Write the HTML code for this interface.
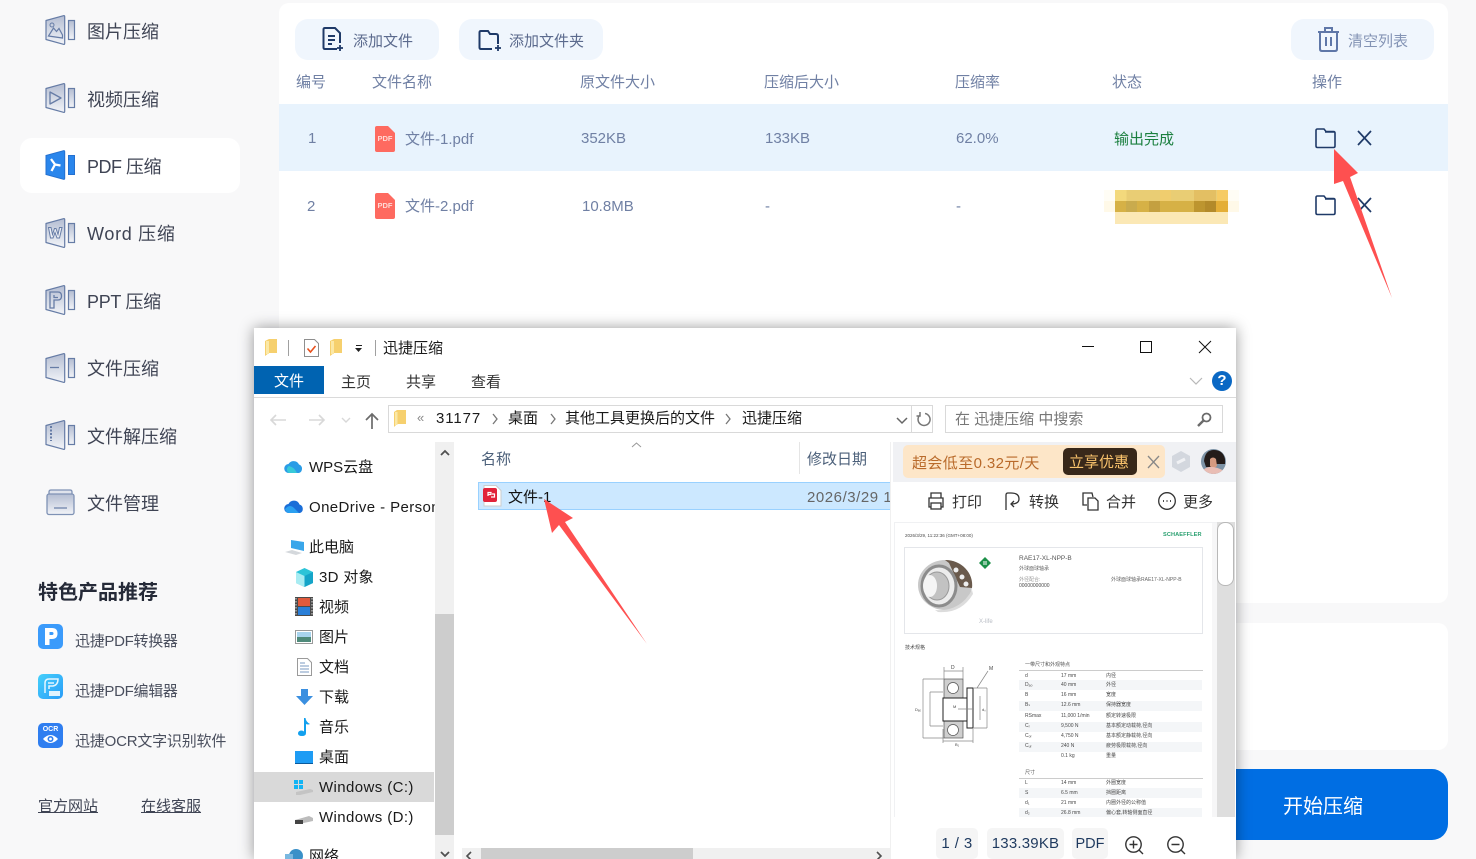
<!DOCTYPE html>
<html lang="zh"><head><meta charset="utf-8"><title>迅捷压缩</title>
<style>
*{box-sizing:border-box}
html,body{margin:0;padding:0;width:1476px;height:859px;overflow:hidden;background:#f8f8f9;font-family:"Liberation Sans","Noto Sans CJK SC",sans-serif}
#w{position:relative;width:1476px;height:859px;overflow:hidden}
.a{position:absolute}
.t{position:absolute;white-space:nowrap;line-height:20px;height:20px;margin-top:1px}
.s{font-size:18px;color:#3f4454}
.p{font-size:15px;color:#4a4f5e;letter-spacing:-.3px}
.h{font-size:15px;color:#7080a4}
.r{font-size:15px;color:#7080a4}
.btn{position:absolute;top:19px;height:41px;background:#f0f6fd;border-radius:13px}
.n{font-size:15px;color:#1a1a1a}
.x{font-size:5px;color:#4a4a4a;line-height:6px;height:6px;margin-top:0}
svg{position:absolute;overflow:visible}
</style></head><body><div id="w">
<svg width="0" height="0" style="position:absolute"><defs>
<linearGradient id="g" x1="0" y1="0" x2="0" y2="1"><stop offset="0" stop-color="#b4bdd2"/><stop offset="1" stop-color="#f2f4f8"/></linearGradient>
<symbol id="pn" viewBox="0 0 30 30" overflow="visible"><path d="M1 5.500 18.500.7Q19.700.4 19.700 1.600V28.400Q19.700 29.600 18.500 29.300L1 24.500Z" fill="url(#g)" stroke="#667ca6" stroke-width="1.200" stroke-linejoin="round"/><rect x="23.500" y="5.500" width="6" height="19" fill="url(#g)" stroke="#667ca6" stroke-width="1.200"/></symbol>
<clipPath id="av"><circle cx="12.500" cy="12.500" r="12.500"/></clipPath>
</defs></svg>

<!-- sidebar -->
<div class="a" style="left:20px;top:138px;width:220px;height:55px;background:#fff;border-radius:12px"></div>

<svg style="left:45px;top:15px" width="30" height="30"><use href="#pn"/><path d="M3.500 21 8.500 13l3 3.500 2.500-3 3.500 6.500V23z" fill="none" stroke="#667ca6" stroke-width="1.200"/><circle cx="7" cy="10" r="2" fill="none" stroke="#667ca6"/></svg>
<div class="t s" style="left:87px;top:21px">图片压缩</div>
<svg style="left:45px;top:83px" width="30" height="30"><use href="#pn"/><path d="M5 9v12l11-6z" fill="none" stroke="#667ca6" stroke-width="1.300" stroke-linejoin="round"/></svg>
<div class="t s" style="left:87px;top:89px">视频压缩</div>
<svg style="left:45px;top:150px" width="30" height="30"><path d="M1 5.500 18.500.7Q19.700.4 19.700 1.600V28.400Q19.700 29.600 18.500 29.300L1 24.500Z" fill="#2a86ec" stroke="#2470d0"/><rect x="23.500" y="5.500" width="6" height="19" fill="#2a86ec" stroke="#2470d0"/><path d="M6 9 10 14.500 6.500 21M10 14.500 15.500 15.500" fill="none" stroke="#fff" stroke-width="2.300"/></svg>
<div class="t s" style="left:87px;top:156px;letter-spacing:-.5px">PDF 压缩</div>
<svg style="left:45px;top:218px" width="30" height="30"><use href="#pn"/><path d="M3.500 9.500h2.500l1.500 7 2-6h1.500l2 6 1.500-7h2.500L14.500 20h-2.500l-2-5.500-2 5.500H5.500z" fill="#eef0f5" stroke="#667ca6"/></svg>
<div class="t s" style="left:87px;top:223px;letter-spacing:.7px">Word 压缩</div>
<svg style="left:45px;top:285px" width="30" height="30"><use href="#pn"/><path d="M5 7h8q3.500 0 3.500 4t-3.500 4H9v8H5zM9 10v2.500h4" fill="none" stroke="#667ca6" stroke-width="1.300"/></svg>
<div class="t s" style="left:87px;top:291px;letter-spacing:-.3px">PPT 压缩</div>
<svg style="left:45px;top:353px" width="30" height="30"><use href="#pn"/><path d="M5 14.500h9" stroke="#667ca6" stroke-width="1.300"/></svg>
<div class="t s" style="left:87px;top:358px">文件压缩</div>
<svg style="left:45px;top:420px" width="30" height="30"><use href="#pn"/><path d="M6 6v15" stroke="#667ca6" stroke-width="2" stroke-dasharray="2 1.500"/></svg>
<div class="t s" style="left:87px;top:426px">文件解压缩</div>
<svg style="left:46px;top:488px" width="29" height="28"><path d="M3 4q0-2 2-2h19q2 0 2 2v3H3z" fill="#dfe3ec" stroke="#7f92b5" stroke-width="1.300"/><rect x="1" y="6" width="27" height="20.500" rx="2" fill="url(#g)" stroke="#7f92b5" stroke-width="1.300"/><path d="M8 20h13" stroke="#667ca6" stroke-width="1.200"/></svg>
<div class="t s" style="left:87px;top:493px">文件管理</div>

<div class="t" style="left:38px;top:582px;font-size:20px;font-weight:700;color:#252a38">特色产品推荐</div>
<div class="a" style="left:38px;top:624px;width:25px;height:25px;border-radius:5px;background:#3b9bfb"></div>
<svg style="left:38px;top:624px" width="25" height="25"><path d="M7 21V4h7q5.500 0 5.500 5.500T14 15h-2.500v6z" fill="#fff"/><path d="M11.500 8v3H14q1.500 0 1.500-1.500T14 8z" fill="#3b9bfb"/></svg>
<div class="t p" style="left:75px;top:631px">迅捷PDF转换器</div>
<div class="a" style="left:38px;top:674px;width:25px;height:25px;border-radius:5px;background:linear-gradient(135deg,#45d0fb,#2a9cf8)"></div>
<svg style="left:38px;top:674px" width="25" height="25"><path d="M7 19V9q0-4 4-4h9q0 6-5 7h-4v3M10 9h6" fill="none" stroke="#e4f6ff" stroke-width="1.500"/><rect x="11" y="17" width="11" height="5" fill="#fff" opacity=".85"/></svg>
<div class="t p" style="left:75px;top:681px">迅捷PDF编辑器</div>
<div class="a" style="left:38px;top:723px;width:25px;height:25px;border-radius:5px;background:#2f7ef0"></div>
<div class="t" style="left:38px;top:725px;width:25px;text-align:center;font-size:7px;line-height:8px;height:8px;font-weight:700;color:#fff">OCR</div>
<svg style="left:38px;top:723px" width="25" height="25"><path d="M5 16q7.500-8 15 0-7.500 8-15 0z" fill="#fff"/><circle cx="12.500" cy="16" r="3" fill="#2f7ef0"/><circle cx="12.500" cy="16" r="1.400" fill="#fff"/></svg>
<div class="t p" style="left:75px;top:731px;letter-spacing:-.2px">迅捷OCR文字识别软件</div>
<div class="t" style="left:38px;top:796px;font-size:15px;color:#3f4454;text-decoration:underline">官方网站</div>
<div class="t" style="left:141px;top:796px;font-size:15px;color:#3f4454;text-decoration:underline">在线客服</div>

<!-- main card -->
<div class="a" style="left:279px;top:3px;width:1169px;height:600px;background:#fff;border-radius:10px"></div>
<div class="a" style="left:1100px;top:623px;width:348px;height:127px;background:#fff;border-radius:10px"></div>
<div class="a" style="left:1100px;top:769px;width:348px;height:71px;background:#006ee3;border-radius:16px"></div>
<div class="t" style="left:1283px;top:796px;font-size:20px;color:#fff">开始压缩</div>

<div class="btn" style="left:295px;width:144px"></div>
<svg style="left:322px;top:27px" width="24" height="26" fill="none" stroke="#1f3a68" stroke-width="2"><path d="M15 22H3q-1.500 0-1.500-1.500v-18Q1.500 1 3 1h10l5 5v10"/><path d="M6 9h7M6 13h7M6 17h4"/><path d="M18 18v6M15 21h6" stroke-width="1.800"/></svg>
<div class="t r" style="left:353px;top:31px;color:#5b6a8d">添加文件</div>
<div class="btn" style="left:459px;width:144px"></div>
<svg style="left:478px;top:30px" width="25" height="26" fill="none" stroke="#1f3a68" stroke-width="2"><path d="M14 19H3q-1.500 0-1.500-1.500v-15Q1.500 1 3 1h7l2 3h6q2 0 2 2v8"/><path d="M20 15v6M17 18h6" stroke-width="1.800"/></svg>
<div class="t r" style="left:509px;top:31px;color:#5b6a8d">添加文件夹</div>
<div class="btn" style="left:1291px;width:143px"></div>
<svg style="left:1317px;top:27px" width="24" height="25" fill="none" stroke="#5f77a8" stroke-width="2"><path d="M1 5h21M8 4V1h7v3M3 5v17q0 2 2 2h13q2 0 2-2V5M9 10v9M14 10v9"/></svg>
<div class="t r" style="left:1348px;top:31px;color:#8494b5">清空列表</div>

<div class="t h" style="left:296px;top:72px">编号</div>
<div class="t h" style="left:372px;top:72px">文件名称</div>
<div class="t h" style="left:580px;top:72px">原文件大小</div>
<div class="t h" style="left:764px;top:72px">压缩后大小</div>
<div class="t h" style="left:955px;top:72px">压缩率</div>
<div class="t h" style="left:1112px;top:72px">状态</div>
<div class="t h" style="left:1312px;top:72px">操作</div>

<div class="a" style="left:279px;top:104px;width:1169px;height:67px;background:#e8f3fd"></div>
<div class="t r" style="left:308px;top:128px">1</div>
<svg style="left:375px;top:126px" width="20" height="26"><path d="M2 0h11l7 7v17q0 2-2 2H2q-2 0-2-2V2q0-2 2-2z" fill="#fe6a60"/></svg>
<div class="t" style="left:375px;top:128px;width:20px;text-align:center;font-size:7.500px;font-weight:700;color:#ffd8d4">PDF</div>
<div class="t" style="left:405px;top:129px;font-size:15px;color:#7080a4">文件-1.pdf</div>
<div class="t r" style="left:581px;top:128px">352KB</div>
<div class="t r" style="left:765px;top:128px">133KB</div>
<div class="t r" style="left:956px;top:128px">62.0%</div>
<div class="t" style="left:1114px;top:129px;font-size:15px;color:#1c8040">输出完成</div>
<svg style="left:1315px;top:128px" width="22" height="21" fill="none" stroke="#1f3a68" stroke-width="1.600"><path d="M2.500 19.500H18.500q1.500 0 1.500-1.500V5q0-1.500-1.500-1.500H11L9 1H2.500Q1 1 1 2.500V18q0 1.500 1.500 1.500zM10 4h10"/></svg>
<svg style="left:1357px;top:130px" width="15" height="16" stroke="#1f3a68" stroke-width="1.700"><path d="M1 1 14 15M14 1 1 15"/></svg>

<div class="t r" style="left:307px;top:196px">2</div>
<svg style="left:375px;top:193px" width="20" height="26"><path d="M2 0h11l7 7v17q0 2-2 2H2q-2 0-2-2V2q0-2 2-2z" fill="#fe6a60"/></svg>
<div class="t" style="left:375px;top:195px;width:20px;text-align:center;font-size:7.500px;font-weight:700;color:#ffd8d4">PDF</div>
<div class="t" style="left:405px;top:196px;font-size:15px;color:#7080a4">文件-2.pdf</div>
<div class="t r" style="left:582px;top:196px">10.8MB</div>
<div class="t r" style="left:765px;top:196px">-</div>
<div class="t r" style="left:956px;top:196px">-</div>

<svg style="left:1104px;top:190px" width="135" height="34" shape-rendering="crispEdges">
<rect width="135" height="11" fill="#fffdf5"/><rect y="11" width="135" height="11" fill="#fff9e8"/>
<g transform="translate(11,0)">
<rect width="113" height="11" fill="#e9cd74"/><rect width="11.300" height="11" fill="#f3d97c"/><rect x="79" width="22" height="11" fill="#e3bf63"/><rect x="102" width="11" height="11" fill="#f6cb64"/><rect x="45" width="11" height="11" fill="#f0cd6e"/>
<rect y="11" width="113" height="11" fill="#d6b146"/><rect x="11" y="11" width="11" height="11" fill="#c9ab4d"/><rect x="34" y="11" width="11" height="11" fill="#c4a040"/><rect x="79" y="11" width="11" height="11" fill="#bd952f"/><rect x="90" y="11" width="11" height="11" fill="#b38a2a"/><rect x="101" y="11" width="12" height="11" fill="#e4ae36"/>
<rect y="22" width="113" height="12" fill="#fbe8b5"/></g></svg>
<svg style="left:1315px;top:195px" width="22" height="21" fill="none" stroke="#1f3a68" stroke-width="1.600"><path d="M2.500 19.500H18.500q1.500 0 1.500-1.500V5q0-1.500-1.500-1.500H11L9 1H2.500Q1 1 1 2.500V18q0 1.500 1.500 1.500zM10 4h10"/></svg>
<svg style="left:1357px;top:197px" width="15" height="16" stroke="#1f3a68" stroke-width="1.700"><path d="M1 1 14 15M14 1 1 15"/></svg>
<svg style="left:0;top:0" width="1476" height="859"><path d="M1334 149 1358 173 1350 177 1392 298 1343 181 1334 184Z" fill="#fe5050"/></svg>

<!-- explorer dialog -->
<div class="a" style="left:254px;top:328px;width:982px;height:531px;background:#fff;box-shadow:0 0 14px rgba(0,0,0,.4)"></div>

<svg style="left:265px;top:339px" width="14" height="18"><path d="M0 2 4 0h8v14H4l-4 3z" fill="#f6d06e"/><rect x="1" y="2" width="3" height="13" fill="#fbe8a6"/></svg>
<div class="a" style="left:288px;top:340px;width:1px;height:16px;background:#a0a0a0"></div>
<svg style="left:304px;top:339px" width="15" height="18"><path d="M.5.500h10l4 4v13H.500z" fill="#fff" stroke="#8e8e8e"/><path d="M3.500 9.500l3 3.500 5-6" fill="none" stroke="#e8501c" stroke-width="1.600"/></svg>
<svg style="left:330px;top:339px" width="14" height="18"><path d="M0 2 4 0h8v14H4l-4 3z" fill="#f6d06e"/><rect x="1" y="2" width="3" height="13" fill="#fbe8a6"/></svg>
<svg style="left:355px;top:345px" width="8" height="8"><path d="M1 .500h6" stroke="#222"/><path d="M0 3h7L3.500 7z" fill="#222"/></svg>
<div class="a" style="left:375px;top:340px;width:1px;height:16px;background:#a0a0a0"></div>
<div class="t" style="left:383px;top:338px;font-size:15px;color:#1a1a1a">迅捷压缩</div>
<div class="a" style="left:1082px;top:346px;width:12px;height:1px;background:#111"></div>
<div class="a" style="left:1140px;top:341px;width:12px;height:12px;border:1px solid #111"></div>
<svg style="left:1199px;top:341px" width="12" height="12" stroke="#111"><path d="M0 0 12 12M12 0 0 12"/></svg>

<div class="a" style="left:254px;top:366px;width:70px;height:28px;background:#0063b1"></div>
<div class="t" style="left:274px;top:371px;font-size:15px;color:#fff">文件</div>
<div class="t n" style="left:341px;top:372px;color:#333">主页</div>
<div class="t n" style="left:406px;top:372px;color:#333">共享</div>
<div class="t n" style="left:471px;top:372px;color:#333">查看</div>
<svg style="left:1189px;top:377px" width="14" height="8" fill="none" stroke="#b8b8b8" stroke-width="1.200"><path d="M1 1 7 7 13 1"/></svg>
<div class="a" style="left:1212px;top:371px;width:20px;height:20px;border-radius:50%;background:#0a68c4;color:#fff;font-size:15px;font-weight:700;line-height:20px;text-align:center">?</div>
<div class="a" style="left:254px;top:397px;width:982px;height:1px;background:#dadada"></div>

<svg style="left:270px;top:412px" width="108" height="17" fill="none"><path d="M1 8h15M6 3 1 8l5 5" stroke="#d8d8d8" stroke-width="1.600"/><path d="M39 8h15M49 3l5 5-5 5" stroke="#d8d8d8" stroke-width="1.600"/><path d="M72 6l4 4 4-4" stroke="#d8d8d8" stroke-width="1.400"/><path d="M102 17V2M96 8l6-6 6 6" stroke="#6b6b6b" stroke-width="1.700"/></svg>
<div class="a" style="left:388px;top:405px;width:545px;height:28px;border:1px solid #d9d9d9"></div>
<div class="a" style="left:911px;top:405px;width:1px;height:28px;background:#d9d9d9"></div>
<svg style="left:394px;top:410px" width="13" height="17"><path d="M0 2 3 0h9v14H3l-3 3z" fill="#f6d06e"/><rect x="1" y="2" width="2.500" height="13" fill="#fbe8a6"/></svg>
<div class="t" style="left:417px;top:407px;font-size:13px;color:#888">«</div>
<div class="t n" style="left:436px;top:408px;letter-spacing:.9px">31177</div>
<svg style="left:491px;top:413px" width="240" height="12" fill="none" stroke="#777" stroke-width="1.300"><path d="M2 1l4 5-4 5M60 1l4 5-4 5M235 1l4 5-4 5"/></svg>
<div class="t n" style="left:508px;top:408px">桌面</div>
<div class="t n" style="left:565px;top:408px">其他工具更换后的文件</div>
<div class="t n" style="left:742px;top:408px">迅捷压缩</div>
<svg style="left:896px;top:417px" width="12" height="8" fill="none" stroke="#666" stroke-width="1.500"><path d="M1 1l5 5 5-5"/></svg>
<svg style="left:916px;top:412px" width="15" height="15" fill="none" stroke="#777" stroke-width="1.500"><path d="M9 1.500A6 6 0 1 1 4 3M4 0v4H.500"/></svg>
<div class="a" style="left:945px;top:405px;width:278px;height:28px;border:1px solid #d9d9d9"></div>
<div class="t" style="left:955px;top:409px;font-size:15px;color:#777">在 迅捷压缩 中搜索</div>
<svg style="left:1197px;top:412px" width="15" height="15" fill="none" stroke="#6b6b6b" stroke-width="1.800"><circle cx="9.500" cy="5.500" r="4"/><path d="M6.500 8.500 1 14" stroke-width="2.400"/></svg>

<!-- nav -->
<div class="a" style="left:435px;top:442px;width:19px;height:417px;background:#f0f0f0"></div>
<div class="a" style="left:435px;top:614px;width:19px;height:221px;background:#cdcdcd"></div>
<svg style="left:440px;top:449px" width="10" height="7" fill="none" stroke="#505050" stroke-width="1.800"><path d="M1 6l4-4 4 4"/></svg>
<svg style="left:440px;top:851px" width="10" height="7" fill="none" stroke="#505050" stroke-width="1.800"><path d="M1 1l4 4 4-4"/></svg>
<div class="a" style="left:254px;top:772px;width:180px;height:30px;background:#d9d9d9"></div>

<svg style="left:284px;top:459px" width="20" height="15"><path d="M5 14a4.500 4.500 0 0 1-.5-9A6 6 0 0 1 15 5.500 4.500 4.500 0 0 1 15 14z" fill="#2a9ce6"/><path d="M5 14a4 4 0 0 1 0-7q5 1 8 7z" fill="#38c9d8"/></svg>
<div class="t n" style="left:309px;top:457px">WPS云盘</div>
<svg style="left:284px;top:499px" width="21" height="15"><path d="M5 14a4.500 4.500 0 0 1-.5-9A6 6 0 0 1 15.500 5.500 4.500 4.500 0 0 1 16 14z" fill="#1a6ed8"/><path d="M1 10q5-6 10 0l4 4H5q-3 0-4-4z" fill="#2ba0f0"/></svg>
<div class="a" style="left:309px;top:497px;width:126px;height:22px;overflow:hidden"><div class="t n" style="left:0;top:0;letter-spacing:.4px">OneDrive - Personal</div></div>
<svg style="left:285px;top:539px" width="20" height="17"><path d="M6 1 19 3v9L6 9z" fill="#39a6ea"/><path d="M0 13l7-2 10 3-6 2z" fill="#d4d8dc"/></svg>
<div class="t n" style="left:309px;top:537px">此电脑</div>
<svg style="left:295px;top:568px" width="19" height="19"><path d="M9.500 0 18 4v11l-8.500 4L1 15V4z" fill="#2cc4d8"/><path d="M1 4l8.500 4v11L1 15z" fill="#a8ecf2"/><path d="M9.500 8 18 4v11l-8.500 4z" fill="#15a4c8"/></svg>
<div class="t n" style="left:319px;top:567px;letter-spacing:.3px">3D 对象</div>
<svg style="left:295px;top:597px" width="18" height="19"><rect width="18" height="19" fill="#4a4a4a"/><rect x="3" y="1" width="12" height="8" fill="#e05a3c"/><rect x="3" y="10" width="12" height="8" fill="#2a7fd8"/><path d="M1 1v17M17 1v17" stroke="#ddd" stroke-dasharray="1.500 1.500"/></svg>
<div class="t n" style="left:319px;top:597px">视频</div>
<svg style="left:295px;top:630px" width="18" height="14"><rect x=".5" y=".5" width="17" height="13" fill="#fff" stroke="#9a9a9a"/><rect x="2" y="2" width="14" height="5" fill="#a8d4ee"/><rect x="2" y="7" width="14" height="5" fill="#4f8a7a"/></svg>
<div class="t n" style="left:319px;top:627px">图片</div>
<svg style="left:297px;top:658px" width="15" height="18" fill="none"><path d="M.5.500h10l4 4v13H.500z" fill="#fff" stroke="#9a9a9a"/><path d="M3 5h5M3 8h9M3 11h9M3 14h9" stroke="#7a9ac0"/></svg>
<div class="t n" style="left:319px;top:657px">文档</div>
<svg style="left:296px;top:689px" width="17" height="16"><path d="M5 0h7v7h5l-8.500 9L0 7h5z" fill="#3a8fe0"/></svg>
<div class="t n" style="left:319px;top:687px">下载</div>
<svg style="left:298px;top:718px" width="13" height="18"><path d="M6 0h1.500q.5 4 4.500 6-2 1-4 0v9q0 3-4 3T0 15.500 3 12.500q2 0 3 1z" fill="#12a0ee"/></svg>
<div class="t n" style="left:319px;top:717px">音乐</div>
<div class="a" style="left:295px;top:751px;width:18px;height:13px;background:#1e9cf4;border-bottom:1px solid #0a5a9c"></div>
<div class="t n" style="left:319px;top:747px">桌面</div>
<svg style="left:294px;top:780px" width="20" height="16"><rect x="0" y="0" width="4" height="4" fill="#12b4f4"/><rect x="5" y="0" width="4" height="4" fill="#12b4f4"/><rect x="0" y="5" width="4" height="4" fill="#12b4f4"/><rect x="5" y="5" width="4" height="4" fill="#12b4f4"/><path d="M2 12l14-3 3 1v2L6 15H2z" fill="#c4c4c4"/></svg>
<div class="t n" style="left:319px;top:777px;letter-spacing:.4px">Windows (C:)</div>
<svg style="left:295px;top:816px" width="19" height="9"><path d="M0 4l14-4 4 2v3L4 8H0z" fill="#bcbcbc"/><path d="M0 4h8v4H0z" fill="#444"/></svg>
<div class="t n" style="left:319px;top:807px;letter-spacing:.4px">Windows (D:)</div>
<svg style="left:285px;top:848px" width="19" height="11"><circle cx="11" cy="8" r="7" fill="#3a90c8"/><rect x="0" y="6" width="8" height="6" fill="#7ab8e0"/></svg>
<div class="t n" style="left:309px;top:846px">网络</div>

<!-- list -->
<svg style="left:631px;top:442px" width="11" height="6" fill="none" stroke="#999"><path d="M1 5l4.500-4L10 5"/></svg>
<div class="t" style="left:481px;top:449px;font-size:15px;color:#4c607a">名称</div>
<div class="a" style="left:799px;top:442px;width:1px;height:32px;background:#e5e5e5"></div>
<div class="t" style="left:807px;top:449px;font-size:15px;color:#4c607a">修改日期</div>
<div class="a" style="left:478px;top:482px;width:412px;height:28px;background:#cce8ff;border:1px solid #99d1ff;border-right:0"></div>
<svg style="left:483px;top:485px" width="19" height="22"><path d="M1 .500h12l5 5v15.500H1z" fill="#fff" stroke="#ccc"/><rect x="0" y="3" width="14" height="14" rx="2" fill="#e1233a"/><path d="M5 11V7.500h3v2H5M9 9h2.500v3H8" fill="none" stroke="#fff" stroke-width="1.200"/></svg>
<div class="t n" style="left:508px;top:487px;color:#111">文件-1</div>
<div class="t" style="left:807px;top:487px;font-size:15px;color:#666;letter-spacing:.55px">2026/3/29 11:22</div>
<div class="a" style="left:462px;top:848px;width:428px;height:11px;background:#f0f0f0"></div>
<div class="a" style="left:481px;top:848px;width:212px;height:11px;background:#cdcdcd"></div>
<svg style="left:466px;top:852px" width="7" height="8" fill="none" stroke="#505050" stroke-width="1.600"><path d="M5 0 1 4l4 4"/></svg>
<svg style="left:876px;top:852px" width="7" height="8" fill="none" stroke="#505050" stroke-width="1.600"><path d="M1 0l4 4-4 4"/></svg>

<svg style="left:0;top:0" width="1476" height="859"><path d="M544 499 573 518 565 522 647 644 559 525 552 533Z" fill="#fe5050"/></svg>

<!-- preview pane -->
<div class="a" style="left:890px;top:442px;width:346px;height:417px;background:#fff;border-left:1px solid #f0f0f0"></div>
<div class="a" style="left:893px;top:442px;width:343px;height:40px;background:#f0f1f4"></div>
<div class="a" style="left:903px;top:445px;width:262px;height:33px;background:#fde6c8;border-radius:5px"></div>
<div class="t" style="left:912px;top:453px;font-size:15px;color:#b96a2a;letter-spacing:.4px">超会低至0.32元/天</div>
<div class="a" style="left:1063px;top:448px;width:74px;height:27px;background:#38281a;border-radius:5px"></div>
<div class="t" style="left:1069px;top:452px;font-size:15px;color:#f8c26c">立享优惠</div>
<svg style="left:1148px;top:456px" width="11" height="12" stroke="#888" stroke-width="1.300"><path d="M0 0 11 12M11 0 0 12"/></svg>
<svg style="left:1172px;top:451px" width="18" height="21"><path d="M9 0 18 5v11l-9 5-9-5V5z" fill="#d3d7de"/><path d="M5 12 13 8" stroke="#f0f1f4" stroke-width="3"/></svg>
<svg style="left:1201px;top:449px" width="25" height="25"><g clip-path="url(#av)"><rect width="25" height="25" fill="#7d93a6"/><path d="M3 12Q4 1 13 1t11 9v5H15l-4 3H5z" fill="#241c1a"/><path d="M9 10q3-3 6 0l1 7-4 3-3-3z" fill="#d59a80"/><path d="M0 25q3-8 12-7t13 7z" fill="#e9bdb4"/></g></svg>

<svg style="left:928px;top:492px" width="16" height="18" fill="none" stroke="#333" stroke-width="1.300"><path d="M3 6V1h10v5M3 15H1V6h14v9h-2"/><rect x="3" y="11" width="10" height="6"/></svg>
<div class="t n" style="left:952px;top:492px;color:#333">打印</div>
<svg style="left:1005px;top:492px" width="16" height="19" fill="none" stroke="#333" stroke-width="1.300"><path d="M1 18V3q0-2 2-2h3q8 0 8 6 0 5-8 5"/><path d="M9 9 6 12l3 3"/></svg>
<div class="t n" style="left:1029px;top:492px;color:#333">转换</div>
<svg style="left:1082px;top:492px" width="17" height="19" fill="none" stroke="#333" stroke-width="1.300"><path d="M5 13H1V1h9l1 4"/><path d="M6 6h7l3 3v9H6z"/></svg>
<div class="t n" style="left:1106px;top:492px;color:#333">合并</div>
<svg style="left:1158px;top:492px" width="18" height="18" fill="none" stroke="#333" stroke-width="1.300"><circle cx="9" cy="9" r="8.300"/><path d="M5 9h1M8.500 9h1M12 9h1" stroke-width="1.700"/></svg>
<div class="t n" style="left:1183px;top:492px;color:#333">更多</div>

<!-- document -->
<div class="a" style="left:894px;top:522px;width:323px;height:295px;background:#fff;border:1px solid #f0f1f3;border-bottom:0;border-right:0;overflow:hidden">
  <div class="a" style="left:317px;top:0;width:5px;height:295px;background:#f6f6f7"></div>
  <div class="t x" style="left:10px;top:10px;font-size:4.500px">2026/3/29, 11:22:36 (GMT+08:00)</div>
  <div class="t x" style="left:268px;top:9px;font-weight:700;color:#2aa070;font-size:5.600px;letter-spacing:.1px">SCHAEFFLER</div>
  <div class="a" style="left:9px;top:24px;width:299px;height:87px;border:1px solid #e4e6ea"></div>
  <svg style="left:20px;top:32px" width="60" height="60"><ellipse cx="30" cy="30" rx="27" ry="25" fill="#c8c8c8"/><path d="M30 5a27 25 0 0 1 27 28L45 32 34 8z" fill="#6a5a4c"/><circle cx="47" cy="22" r="2.500" fill="#eee"/><circle cx="51" cy="29" r="2.500" fill="#eee"/><circle cx="41" cy="15" r="2.500" fill="#eee"/><ellipse cx="24" cy="31" rx="17" ry="20" fill="#ececec" stroke="#8c8c8c" stroke-width="3"/><ellipse cx="22" cy="31" rx="12" ry="14" fill="#c2c2c2" stroke="#999"/><ellipse cx="15" cy="31" rx="7" ry="11" fill="#f5f5f5"/><path d="M20 55q25 2 37-20l1 4q-12 20-35 18z" fill="#dcdcdc"/></svg>
  <svg style="left:84px;top:34px" width="12" height="12"><path d="M6 0 12 6 6 12 0 6z" fill="#1c9048"/><path d="M5 4v4M7 4v4" stroke="#fff"/></svg>
  <div class="t x" style="left:124px;top:32px;font-size:6.500px;height:8px;line-height:8px;color:#555">RAE17-XL-NPP-B</div>
  <div class="t x" style="left:124px;top:43px;color:#666">外球面球轴承</div>
  <div class="t x" style="left:124px;top:54px;color:#999">外径配合:</div>
  <div class="t x" style="left:124px;top:60px">00000000000</div>
  <div class="t x" style="left:216px;top:54px;color:#666">外球面球轴承RAE17-XL-NPP-B</div>
  <div class="t x" style="left:84px;top:96px;font-size:6px;color:#b8bcc4">X-life</div>
  <div class="t x" style="left:10px;top:122px">技术规格</div>
  <svg style="left:20px;top:140px" width="75" height="85" fill="none" stroke="#555" stroke-width=".7">
    <rect x="29" y="16" width="19" height="19" fill="#cfcfcf"/><rect x="29" y="58" width="19" height="17" fill="#cfcfcf"/>
    <circle cx="38" cy="25" r="5.500" fill="#fff"/><circle cx="38" cy="67" r="5.500" fill="#fff"/>
    <rect x="28" y="35" width="30" height="23" fill="#fff" stroke="#222" stroke-width="1"/>
    <rect x="52" y="25" width="6" height="40" fill="#fff" stroke="#222" stroke-width="1"/>
    <path d="M8 16v59M15 29v34M72 25v40M65 33v24M29 8h19M28 78h30M29 4v12M48 4v12M28 66v14M58 66v14M8 16h21M8 75h21M15 29h13M15 63h13M58 25h14M58 65h14M62 25 73 8M43 46h16" stroke="#888"/>
    <text x="36" y="6" font-size="5" fill="#444" stroke="none">D</text>
    <text x="74" y="7" font-size="5" fill="#444" stroke="none">M</text>
    <text x="0" y="48" font-size="4" fill="#444" stroke="none">Dₐ₀</text>
    <text x="67" y="48" font-size="4" fill="#444" stroke="none">dₛ</text>
    <text x="38" y="45" font-size="4" fill="#444" stroke="none">M</text>
    <text x="40" y="83" font-size="4" fill="#444" stroke="none">B₁</text>
  </svg>
  <div class="a" style="left:124px;top:147px;width:184px;height:1px;background:#ccc"></div>
  <div class="t x" style="left:130px;top:139px;color:#555">一带尺寸和外观特点</div>
  <div class="a" style="left:124px;top:157px;width:183px;height:10px;background:#f4f6f8"></div>
  <div class="a" style="left:124px;top:178px;width:183px;height:10px;background:#f4f6f8"></div>
  <div class="a" style="left:124px;top:199px;width:183px;height:10px;background:#f4f6f8"></div>
  <div class="a" style="left:124px;top:219px;width:183px;height:10px;background:#f4f6f8"></div>
  <div class="t x" style="left:130px;top:150px">d</div><div class="t x" style="left:166px;top:150px">17 mm</div><div class="t x" style="left:211px;top:150px">内径</div>
  <div class="t x" style="left:130px;top:159px">Dₐ₀</div><div class="t x" style="left:166px;top:159px">40 mm</div><div class="t x" style="left:211px;top:159px">外径</div>
  <div class="t x" style="left:130px;top:169px">B</div><div class="t x" style="left:166px;top:169px">16 mm</div><div class="t x" style="left:211px;top:169px">宽度</div>
  <div class="t x" style="left:130px;top:179px">Bₛ</div><div class="t x" style="left:166px;top:179px">12.6 mm</div><div class="t x" style="left:211px;top:179px">保持器宽度</div>
  <div class="t x" style="left:130px;top:190px">RSmax</div><div class="t x" style="left:166px;top:190px">11,000 1/min</div><div class="t x" style="left:211px;top:190px">额定转速极限</div>
  <div class="t x" style="left:130px;top:200px">Cᵣ</div><div class="t x" style="left:166px;top:200px">9,500 N</div><div class="t x" style="left:211px;top:200px">基本额定动载荷,径向</div>
  <div class="t x" style="left:130px;top:210px">Cₒᵣ</div><div class="t x" style="left:166px;top:210px">4,750 N</div><div class="t x" style="left:211px;top:210px">基本额定静载荷,径向</div>
  <div class="t x" style="left:130px;top:220px">Cᵤᵣ</div><div class="t x" style="left:166px;top:220px">240 N</div><div class="t x" style="left:211px;top:220px">疲劳极限载荷,径向</div>
  <div class="t x" style="left:166px;top:230px">0.1 kg</div><div class="t x" style="left:211px;top:230px">重量</div>
  <div class="t x" style="left:130px;top:247px;color:#555">尺寸</div>
  <div class="a" style="left:124px;top:255px;width:184px;height:1px;background:#ccc"></div>
  <div class="a" style="left:124px;top:265px;width:183px;height:10px;background:#f4f6f8"></div>
  <div class="a" style="left:124px;top:285px;width:183px;height:10px;background:#f4f6f8"></div>
  <div class="t x" style="left:130px;top:257px">L</div><div class="t x" style="left:166px;top:257px">14 mm</div><div class="t x" style="left:211px;top:257px">外圈宽度</div>
  <div class="t x" style="left:130px;top:267px">S</div><div class="t x" style="left:166px;top:267px">6.5 mm</div><div class="t x" style="left:211px;top:267px">挡圈距离</div>
  <div class="t x" style="left:130px;top:277px">d₁</div><div class="t x" style="left:166px;top:277px">21 mm</div><div class="t x" style="left:211px;top:277px">内圈外径的公称值</div>
  <div class="t x" style="left:130px;top:287px">d₂</div><div class="t x" style="left:166px;top:287px">26.8 mm</div><div class="t x" style="left:211px;top:287px">偏心套,转轴侧面直径</div>
</div>
<div class="a" style="left:1217px;top:522px;width:18px;height:295px;background:#dedede"></div>
<div class="a" style="left:1217px;top:522px;width:17px;height:64px;background:#fff;border:1px solid #b8b8b8;border-radius:8px"></div>

<div class="a" style="left:936px;top:828px;width:42px;height:31px;background:#f5f5f5;border-radius:5px"></div>
<div class="t" style="left:936px;top:833px;width:42px;text-align:center;font-size:15px;letter-spacing:.4px;color:#1f3a5f">1 / 3</div>
<div class="a" style="left:987px;top:828px;width:77px;height:31px;background:#f5f5f5;border-radius:5px"></div>
<div class="t" style="left:987px;top:833px;width:77px;text-align:center;font-size:15px;letter-spacing:.2px;color:#1f3a5f">133.39KB</div>
<div class="a" style="left:1072px;top:828px;width:36px;height:31px;background:#f5f5f5;border-radius:5px"></div>
<div class="t" style="left:1072px;top:833px;width:36px;text-align:center;font-size:14.500px;color:#1f3a5f">PDF</div>
<svg style="left:1125px;top:836px" width="19" height="19" fill="none" stroke="#333" stroke-width="1.400"><circle cx="8.500" cy="8.500" r="7.700"/><path d="M4.500 8.500h8M8.500 4.500v8M14 14l4 4"/></svg>
<svg style="left:1167px;top:836px" width="19" height="19" fill="none" stroke="#333" stroke-width="1.400"><circle cx="8.500" cy="8.500" r="7.700"/><path d="M4.500 8.500h8M14 14l4 4"/></svg>
</div></body></html>
